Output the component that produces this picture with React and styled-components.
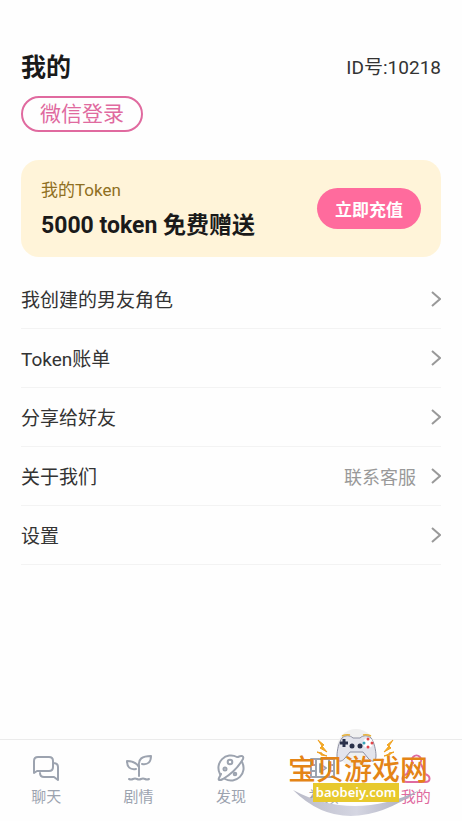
import React from 'react';
import styled, { createGlobalStyle } from 'styled-components';

const GlobalStyle = createGlobalStyle`
  * {
    box-sizing: border-box;
  }

  body {
    margin: 0;
    background: #fefefe;
    color: #333;
    font-family: Roboto, 'Noto Sans CJK SC', sans-serif;
  }

  button {
    font-family: inherit;
    cursor: pointer;
  }
`;

const Page = styled.div`
  display: flex;
  flex-direction: column;
  min-height: 100vh;
`;

const Content = styled.main`
  flex: 1;
  padding: 50px 21px 0;
`;

const Header = styled.header`
  display: flex;
  align-items: center;
  justify-content: space-between;
  height: 36px;
`;

const Title = styled.h1`
  margin: 0;
  color: #1a1a1a;
  font-size: 25px;
  font-weight: 700;
  line-height: 36px;
`;

const UserId = styled.span`
  font-size: 19px;
  line-height: 36px;
`;

const LoginButton = styled.button`
  display: block;
  height: 36px;
  margin-top: 10px;
  padding: 0 17px;
  border: 2px solid #e06a9f;
  border-radius: 18px;
  background: transparent;
  color: #e06a9f;
  font-size: 21px;
  line-height: 32px;
`;

const TokenCard = styled.section`
  display: flex;
  align-items: center;
  justify-content: space-between;
  height: 97px;
  margin-top: 28px;
  padding: 0 20px;
  border-radius: 18px;
  background: #fff4d9;
`;

const TokenLabel = styled.div`
  padding-top: 2px;
  color: #8f6f22;
  font-size: 17px;
  line-height: 28px;
`;

const TokenAmount = styled.div`
  margin-top: 4px;
  color: #1a1a1a;
  font-size: 23px;
  font-weight: 700;
  line-height: 36px;
`;

const RechargeButton = styled.button`
  height: 41px;
  padding: 0 18px;
  border: 0;
  border-radius: 21px;
  background: #ff6b9d;
  color: #fff;
  font-size: 17px;
  font-weight: 700;
`;

const Menu = styled.ul`
  margin: 13px 0 0;
  padding: 0;
  list-style: none;
`;

const MenuItem = styled.li`
  border-bottom: 1px solid #f3f3f3;
`;

const MenuLink = styled.a`
  display: flex;
  align-items: center;
  height: 58px;
  color: #333;
  font-size: 19px;
  text-decoration: none;
`;

const MenuText = styled.span`
  flex: 1;
  padding-bottom: 2px;
`;

const MenuExtra = styled.span`
  margin-right: 15px;
  color: #999;
  font-size: 18px;
`;

const TabBar = styled.nav`
  position: relative;
  display: flex;
  height: 82px;
  border-top: 1px solid #ebebeb;
`;

const Tab = styled.a`
  display: flex;
  flex: 1;
  flex-direction: column;
  align-items: center;
  padding-top: 13px;
  color: ${({ $active }) => ($active ? '#e06a9f' : '#9ca3af')};
  font-size: 15px;
  line-height: 24px;
  text-decoration: none;

  svg {
    margin-bottom: 2px;
  }
`;

const Watermark = styled.div`
  position: absolute;
  right: 28px;
  bottom: 0;
  pointer-events: none;

  svg {
    display: block;
  }
`;

const Chevron = () => (
  <svg width="10" height="16" viewBox="0 0 10 16" fill="none" stroke="#999" strokeWidth="2">
    <path d="M1 1l8 7-8 7" />
  </svg>
);

const TabIcon = ({ children }) => (
  <svg
    width="30"
    height="30"
    viewBox="0 0 30 30"
    fill="none"
    stroke="currentColor"
    strokeWidth="2"
    strokeLinecap="round"
    strokeLinejoin="round"
  >
    {children}
  </svg>
);

const icons = {
  chat: (
    <>
      <path d="M3 20V8q0-4 4-4h11q4 0 4 4v6q0 4-4 4H6z" />
      <path d="M22 10q5 0 5 4v13l-4-3H13q-4 0-4-4" />
    </>
  ),
  story: (
    <>
      <path d="M15 23V13C14 6 18 3 27 3c0 6-3 9-9 8" />
      <path d="M15 14C12 9 8 8 3 8c0 6 3 9 9 8" />
      <path d="M5 26q2 1 4 0t4 0 4 0 4 0 4 0" />
    </>
  ),
  discover: (
    <>
      <path d="M21 4A12.500 12.500 0 0 0 4 21" />
      <path d="M26 9A12.500 12.500 0 0 1 9 26" />
      <path d="M22 4c4-2 6-1 5 2C23 13 17 20 7 26c-4 2-5 1-4-1l2-4" />
      <circle cx="14" cy="9" r="2.300" />
      <circle cx="9" cy="16" r="1.500" />
      <circle cx="19" cy="21" r="1.300" />
    </>
  ),
  video: (
    <path d="M3 6h23v18H3zM8 6v18M21 6v18M3 12h5M3 18h5M21 12h5M21 18h5M12 11v8l6-4z" />
  ),
  mine: (
    <>
      <path d="M12 10a4.600 4.600 0 1 1 7 0" />
      <path d="M12 10C9 12 7 18 6 21c-6 2-6 8 0 8h18c6 0 6-6 0-8-1-3-3-9-5-11" />
    </>
  ),
};

const SiteWatermark = () => (
  <Watermark>
    <svg width="150" height="98" viewBox="284 723 150 98">
      <defs>
        <linearGradient id="swoosh" x1="0" x2="1">
          <stop offset="0" stopColor="#b9bac8" />
          <stop offset="0.500" stopColor="#d5d6e2" />
          <stop offset="1" stopColor="#a4a6b8" />
        </linearGradient>
      </defs>
      <circle cx="356" cy="748" r="19" fill="#f0f0f0" />
      <path
        d="M342 738c3-3 8-3 11 0h7c3-3 8-3 11 0 3 4 5 12 5 18 0 7-5 6-8 2l-5-6h-13l-5 6c-3 4-8 5-8-2 0-6 2-14 5-18z"
        fill="#e3e4ec"
        stroke="#8e90a2"
      />
      <path d="M342 736q4-2 8-1M363 735q4-1 8 1" fill="none" stroke="#e8b23a" strokeWidth="1.500" />
      <path d="M344 739v8M340 743h8" stroke="#29304a" strokeWidth="3" />
      <circle cx="352" cy="746" r="2.500" fill="#29304a" />
      <circle cx="360" cy="746" r="2.500" fill="#29304a" />
      <circle cx="368" cy="743" r="5" fill="#fff" />
      <circle cx="368" cy="739" r="1.500" fill="#e2474b" />
      <circle cx="368" cy="747" r="1.500" fill="#e2474b" />
      <circle cx="364" cy="743" r="1.500" fill="#3aa4b8" />
      <circle cx="372" cy="743" r="1.500" fill="#e2474b" />
      <path d="M318 740l6 5-2 1 5 6-7-4 2-2z" fill="#f5b021" stroke="#f0a020" />
      <path d="M317 752l5 1v1l5 2-6-1v-1z" fill="#f5b021" stroke="#f0a020" />
      <path d="M393 740l-6 5 2 1-5 6 7-4-2-2z" fill="#f5b021" stroke="#f0a020" />
      <path d="M394 752l-5 1v1l-5 2 6-1v-1z" fill="#f5b021" stroke="#f0a020" />
      <path d="M293 790q52 52 127 0-67 32-127 0z" fill="url(#swoosh)" />
      <text
        x="288"
        y="780"
        fill="#e48416"
        fontFamily="'Noto Sans CJK SC', sans-serif"
        fontSize="28"
        fontWeight="500"
      >
        宝贝游戏网
      </text>
      <rect x="313" y="783" width="86" height="19" fill="#e8c92d" />
      <text
        x="356"
        y="797"
        fill="#fff"
        fontFamily="'Noto Sans', sans-serif"
        fontSize="13"
        fontWeight="600"
        textAnchor="middle"
      >
        baobeiy.com
      </text>
    </svg>
  </Watermark>
);

const menuItems = [
  { label: '我创建的男友角色' },
  { label: 'Token账单' },
  { label: '分享给好友' },
  { label: '关于我们', extra: '联系客服' },
  { label: '设置' },
];

const tabs = [
  { icon: 'chat', label: '聊天' },
  { icon: 'story', label: '剧情' },
  { icon: 'discover', label: '发现' },
  { icon: 'video', label: '视频' },
  { icon: 'mine', label: '我的', active: true },
];

const App = () => (
  <Page>
    <GlobalStyle />
    <Content>
      <Header>
        <Title>我的</Title>
        <UserId>ID号:10218</UserId>
      </Header>
      <LoginButton type="button">微信登录</LoginButton>

      <TokenCard>
        <div>
          <TokenLabel>我的Token</TokenLabel>
          <TokenAmount>5000 token 免费赠送</TokenAmount>
        </div>
        <RechargeButton type="button">立即充值</RechargeButton>
      </TokenCard>

      <Menu>
        {menuItems.map(item => (
          <MenuItem key={item.label}>
            <MenuLink href="#">
              <MenuText>{item.label}</MenuText>
              {item.extra && <MenuExtra>{item.extra}</MenuExtra>}
              <Chevron />
            </MenuLink>
          </MenuItem>
        ))}
      </Menu>
    </Content>

    <TabBar>
      {tabs.map(tab => (
        <Tab key={tab.icon} href="#" $active={tab.active}>
          <TabIcon>{icons[tab.icon]}</TabIcon>
          {tab.label}
        </Tab>
      ))}
      <SiteWatermark />
    </TabBar>
  </Page>
);

export default App;
